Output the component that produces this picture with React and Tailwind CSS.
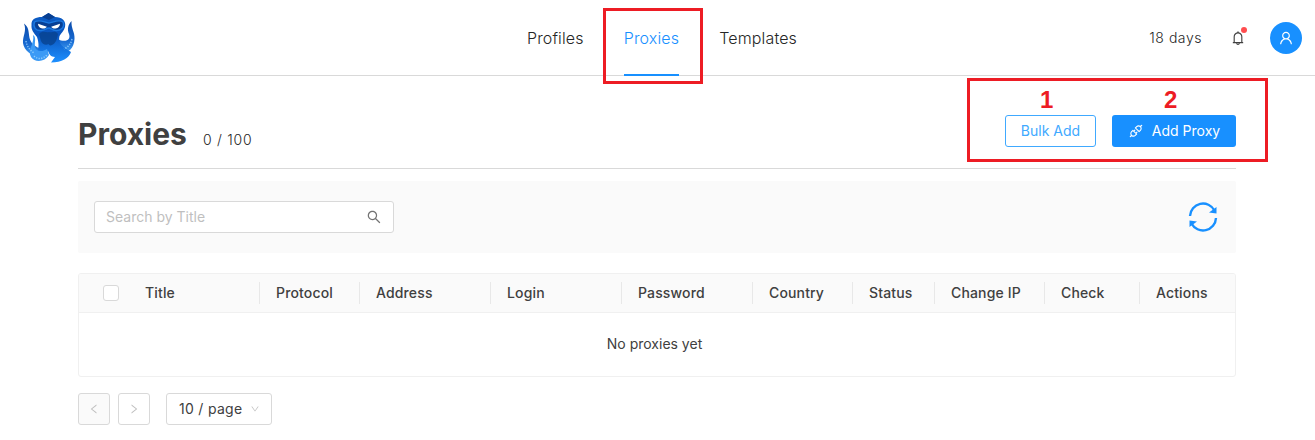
import React, { useState } from 'react';
import {
  AiOutlineApi,
  AiOutlineBell,
  AiOutlineDown,
  AiOutlineLeft,
  AiOutlineRight,
  AiOutlineSearch,
  AiOutlineUser,
} from 'react-icons/ai';

const tabs = ['Profiles', 'Proxies', 'Templates'];

const columns = [
  { title: 'Title', width: 'w-[131px]' },
  { title: 'Protocol', width: 'w-[100px]' },
  { title: 'Address', width: 'w-[131px]' },
  { title: 'Login', width: 'w-[131px]' },
  { title: 'Password', width: 'w-[131px]' },
  { title: 'Country', width: 'w-[100px]' },
  { title: 'Status', width: 'w-[82px]' },
  { title: 'Change IP', width: 'w-[110px]' },
  { title: 'Check', width: 'w-[95px]' },
  { title: 'Actions', width: 'flex-1' },
];

function Logo() {
  return (
    <svg width="56" height="54" viewBox="21 10 56 54" className="shrink-0">
      <defs>
        <linearGradient id="skin" x1="0" y1="0" x2="0" y2="1">
          <stop offset="0" stopColor="#0c5cc4" />
          <stop offset="0.45" stopColor="#0a55bf" />
          <stop offset="1" stopColor="#1e90ff" />
        </linearGradient>
        <linearGradient id="arm" x1="0" y1="0" x2="0" y2="1">
          <stop offset="0" stopColor="#0c4cab" />
          <stop offset="0.6" stopColor="#1668d0" />
          <stop offset="1" stopColor="#46a6fa" />
        </linearGradient>
      </defs>
      {/* arms */}
      <path d="M24 22.500C29 26 28.500 31 29.500 37C31 43 36 46 43 49L41 57C32 55 24 50 23 42C22.500 35 27 30 24 22.500Z" fill="url(#arm)" />
      <path d="M71.500 20C68 24 67 28 69 33C71 39 66 42 57 38L57 52C66 54 74 49 74.500 38C75 31 71 28 71.500 20Z" fill="url(#arm)" />
      {/* head */}
      <path d="M42 16L48.500 12L55 16C62 16 66.500 20 65 26C64 30 61 32 59.500 35C58 41 61 45 67 48.500L71 51C69 57 62 61.500 51 61.500L55 56C51 56 49 53 48 50C45 56 38 57 34 55C40 49 39 42 37 36C34 32 31 29 31.500 24C31 18 36 16 42 16Z" fill="url(#skin)" />
      <path d="M42 16L48.500 12L55 16L49 19Z" fill="#083f91" />
      <path d="M39 33C43 29 46 32 49 31C53 32 55 29 58 33C57 38 56 42 52 44C50 45 49 44 48.500 43C46 45 42 43 41 40Z" fill="#07428f" opacity="0.8" />
      <path d="M33 34C38 37 32 45 37 49C40 51 44 50 47 48L49 54C45 61 35 62 31 56C27 49 35 42 33 34Z" fill="#3b9af5" />
      <path d="M34.500 21C40 17.500 45 22 49 22C53 22 58 17.500 63 21C65 26 61 30 56 29.500C52 29.500 51 27 49 27C46 27 45 29.500 41 29.500C36 30 32.500 26 34.500 21Z" fill="#073f94" stroke="#1b78e0" strokeWidth="1.400" />
      <path d="M38 22.800L46.800 25.800C45.500 28.500 38.500 28.500 38 22.800ZM60 22.800L51.200 25.800C52.500 28.500 59.500 28.500 60 22.800Z" fill="#fff" />
      {/* suckers */}
      <path d="M26 40C27 46 30 49 34 52M34 55C38 59 43 58 47 54M72 38C71 43 68 46 64 48" fill="none" stroke="#9fd6ff" strokeWidth="1.500" strokeDasharray="1.300 1.300" opacity="0.8" />
    </svg>
  );
}

function SyncIcon() {
  return (
    <svg width="30" height="30" viewBox="0 0 30 30" fill="none" stroke="#1890ff" strokeWidth="2.4">
      <path d="M2 14A13 13 0 0 1 26.500 8.500M28 16A13 13 0 0 1 3.500 21.500" />
      <path d="M28.500 5V11.500L21 10.500ZM1.500 25V18.500L9 19.500Z" fill="#1890ff" stroke="none" />
    </svg>
  );
}

function App() {
  const [activeTab, setActiveTab] = useState('Proxies');
  const [search, setSearch] = useState('');

  return (
    <div className="relative h-[440px] w-full overflow-hidden bg-white font-['Inter',sans-serif] text-sm text-[#404040]">
      {/* Header */}
      <header className="grid h-[76px] grid-cols-[1fr_auto_1fr] border-b border-[#d9d9d9] pr-3 pl-[21px]">
        <div className="flex items-center">
          <Logo />
        </div>
        <nav className="flex gap-10 text-base font-light tracking-[0.15px]">
          {tabs.map((tab) => (
            <button
              key={tab}
              onClick={() => setActiveTab(tab)}
              className={
                tab === activeTab
                  ? 'h-[76px] border-b-2 border-[#1890ff] pt-0.5 text-[#1890ff]'
                  : 'h-[76px] border-b-2 border-transparent pt-0.5 text-[#262626]'
              }
            >
              {tab}
            </button>
          ))}
        </nav>
        <div className="flex items-center justify-end pr-px">
          <span className="font-light tracking-[0.55px] text-[#262626]">18 days</span>
          <div className="relative mr-6 ml-7">
            <AiOutlineBell size={16} />
            <span className="absolute -top-[3.500px] -right-[3px] size-1.5 rounded-full bg-[#ff4d4f] mr-0.5" />
          </div>
          <div className="flex size-8 items-center justify-center rounded-full bg-[#1890ff] text-white">
            <AiOutlineUser size={16} />
          </div>
        </div>
      </header>

      <main className="ml-[78px] w-[1158px]">
        {/* Title and actions */}
        <div className="flex h-[93px] items-start justify-between border-b border-[#d9d9d9] pt-[39px]">
          <div className="flex items-baseline">
            <h1 className="text-[30px] leading-[38px] font-bold">Proxies</h1>
            <span className="ml-4 font-light tracking-[0.75px] text-[#262626]">0 / 100</span>
          </div>
          <div className="flex gap-4">
            <button className="h-8 w-[91px] rounded-[3px] border border-[#40a9ff] text-[#40a9ff]">Bulk Add</button>
            <button className="flex h-8 w-[124px] items-center justify-center gap-2 rounded-[3px] bg-[#1890ff] text-white">
              <AiOutlineApi size={16} />
              Add Proxy
            </button>
          </div>
        </div>

        {/* Search */}
        <div className="mt-3 flex h-[72px] items-center justify-between rounded-xs bg-[#fafafa] pr-[18px] pl-4">
          <div className="flex h-8 w-[300px] items-center rounded-[3px] border border-[#d9d9d9] bg-white px-[11px]">
            <input
              value={search}
              onChange={(e) => setSearch(e.target.value)}
              placeholder="Search by Title"
              className="min-w-0 flex-1 outline-none placeholder:text-[#bfbfbf]"
            />
            <AiOutlineSearch size={16} className="text-[#737373]" />
          </div>
          <SyncIcon />
        </div>

        {/* Table */}
        <div className="mt-5 h-[104px] overflow-hidden rounded-[3px] border border-[#f0f0f0]">
          <div className="flex h-[39px] items-center border-b border-[#f0f0f0] bg-[#fafafa] font-medium tracking-[0.15px]">
            <div className="flex w-[50px] shrink-0 pl-6">
              <span className="size-4 rounded-[3px] border border-[#d9d9d9] bg-white" />
            </div>
            {columns.map((col, i) => (
              <div key={col.title} className={`flex h-[22px] items-center border-r pl-4 ${i === columns.length - 1 ? 'border-transparent' : 'border-[#e8e8e8]'} ${col.width}`}>
                {col.title}
              </div>
            ))}
          </div>
          <div className="flex h-[62px] items-center justify-center pr-[5px]">No proxies yet</div>
        </div>

        {/* Pagination */}
        <div className="mt-4 flex">
          <button className="flex size-8 items-center justify-center rounded-[3px] border border-[#d9d9d9] bg-[#fafafa] text-[#bfbfbf]">
            <AiOutlineLeft size={12} />
          </button>
          <button className="ml-2 flex size-8 items-center justify-center rounded-[3px] border border-[#d9d9d9] text-[#bfbfbf]">
            <AiOutlineRight size={12} />
          </button>
          <button className="ml-4 flex h-8 w-[106px] items-center justify-between rounded-[3px] border border-[#d9d9d9] pr-[11px] pl-3">
            <span className="tracking-[0.3px]">10 / page</span>
            <AiOutlineDown size={10} className="text-[#bfbfbf]" />
          </button>
        </div>
      </main>

      {/* Callouts */}
      <div className="absolute top-2 left-[603px] h-[76px] w-[100px] border-3 border-[#ed1c24]" />
      <div className="absolute top-[78px] left-[967px] h-[84px] w-[301px] border-3 border-[#ed1c24]" />
      <span className="absolute top-[86px] left-[1040px] font-['Liberation_Sans',sans-serif] text-2xl leading-7 font-bold text-[#ed1c24]">1</span>
      <span className="absolute top-[86px] left-[1164px] font-['Liberation_Sans',sans-serif] text-2xl leading-7 font-bold text-[#ed1c24]">2</span>
    </div>
  );
}

export default App;
